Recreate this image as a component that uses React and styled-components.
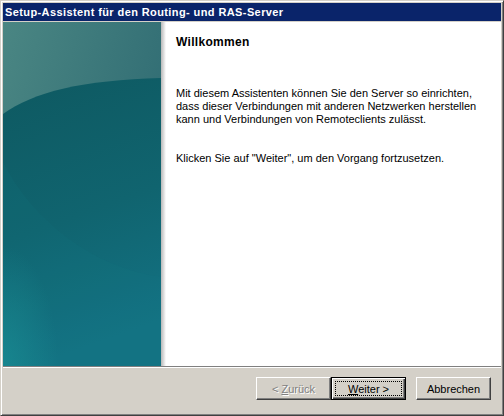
import React from 'react'
import styled, { createGlobalStyle } from 'styled-components'

const Global = createGlobalStyle`
  html, body {
    margin: 0;
    padding: 0;
    background: #D4D0C8;
  }
  body {
    font-family: "Liberation Sans", Arial, sans-serif;
    font-size: 11px;
  }
`

const Window = styled.div`
  width: 504px;
  height: 416px;
  box-sizing: border-box;
  display: flex;
  flex-direction: column;
  background: #D4D0C8;
  border: 1px solid;
  border-color: #D4D0C8 #404040 #404040 #D4D0C8;
  box-shadow: inset 1px 1px #FFF, inset -1px -1px #808080;
  padding: 2px;
`

const TitleBar = styled.div`
  height: 18px;
  flex: 0 0 auto;
  margin-bottom: 1px;
  background: #0A246A;
  color: #FFF;
  font-weight: bold;
  font-size: 11px;
  letter-spacing: 0.4px;
  line-height: 18px;
  padding-left: 2px;
  white-space: nowrap;
`

const Body = styled.div`
  height: 344px;
  flex: 0 0 auto;
  display: flex;
  background: #FFF;
`

const Banner = styled.div`
  width: 158px;
  flex: 0 0 auto;
  svg {
    display: block;
  }
`

const Shade = styled.div`
  width: 5px;
  flex: 0 0 auto;
  background: linear-gradient(to right, #B8B8B8, #DADADA 50%, #FFF);
`

const Page = styled.div`
  flex: 1;
  padding: 13px 20px 0 10px;
`

const Heading = styled.h1`
  margin: 0;
  font-family: "Liberation Sans", Arial, sans-serif;
  font-size: 12px;
  letter-spacing: 0.3px;
  line-height: 15px;
  font-weight: bold;
  color: #000;
`

const Text = styled.p`
  margin: ${({first}) => first ? '37px' : '26px'} 0 0;
  font-size: 11px;
  line-height: 13px;
  color: #000;
`

const Separator = styled.div`
  height: 1px;
  flex: 0 0 auto;
  background: #808080;
  border-bottom: 1px solid #FFF;
`

const Footer = styled.div`
  flex: 1;
  display: flex;
  align-items: flex-start;
  justify-content: flex-end;
  padding: 9px 10px 0 0;
`

const Button = styled.button`
  position: relative;
  width: 75px;
  height: 23px;
  box-sizing: border-box;
  margin: 0;
  padding: 0;
  font-family: "Liberation Sans", Arial, sans-serif;
  font-size: 11px;
  color: #000;
  background: #D4D0C8;
  border: 1px solid;
  border-color: #FFF #404040 #404040 #FFF;
  box-shadow: inset -1px -1px #808080;
  ${({gap}) => gap && `margin-left: 10px;`}
  ${({disabled}) => disabled && `
    color: #808080;
    text-shadow: 1px 1px #FFF;
  `}
  ${({primary}) => primary && `
    border: 1px solid #000;
    box-shadow: inset 1px 1px #FFF, inset -1px -1px #404040, inset -2px -2px #808080;
  `}
  u {
    text-decoration: underline;
  }
`

const Focus = styled.span`
  position: absolute;
  left: 3px;
  top: 3px;
  right: 3px;
  bottom: 3px;
  border: 1px dotted #000;
`

const Art = () => (
  <svg width="158" height="344" viewBox="0 0 158 344">
    <defs>
      <linearGradient id="top" x1="0" y1="0" x2="1" y2="0.6">
        <stop offset="0" stopColor="#4A8683" />
        <stop offset="1" stopColor="#2E6A72" />
      </linearGradient>
      <linearGradient id="low" x1="0" y1="0" x2="0.2" y2="1">
        <stop offset="0" stopColor="#0E5961" />
        <stop offset="0.55" stopColor="#10646F" />
        <stop offset="1" stopColor="#137283" />
      </linearGradient>
      <radialGradient id="glow" cx="0" cy="1" r="0.35">
        <stop offset="0" stopColor="#1A8E94" stopOpacity="0.7" />
        <stop offset="1" stopColor="#1A8E94" stopOpacity="0" />
      </radialGradient>
    </defs>
    <rect width="158" height="344" fill="url(#top)" />
    <path d="M0,92 C30,70 80,58 158,56 L158,344 L0,344 Z" fill="url(#low)" />
    <path d="M0,140 C30,200 90,245 158,255 L158,344 L0,344 Z" fill="#17808A" opacity="0.1" />
    <rect width="158" height="344" fill="url(#glow)" />
  </svg>
)

export default function App() {
  return (
    <>
      <Global />
      <Window>
        <TitleBar>Setup-Assistent für den Routing- und RAS-Server</TitleBar>
        <Body>
          <Banner><Art /></Banner>
          <Shade />
          <Page>
            <Heading>Willkommen</Heading>
            <Text first>
              Mit diesem Assistenten können Sie den Server so einrichten,<br />
              dass dieser Verbindungen mit anderen Netzwerken herstellen<br />
              kann und Verbindungen von Remoteclients zulässt.
            </Text>
            <Text>Klicken Sie auf "Weiter", um den Vorgang fortzusetzen.</Text>
          </Page>
        </Body>
        <Separator />
        <Footer>
          <Button disabled>&lt; <u>Z</u>urück</Button>
          <Button primary><Focus /><u>W</u>eiter &gt;</Button>
          <Button gap>Abbrechen</Button>
        </Footer>
      </Window>
    </>
  )
}
